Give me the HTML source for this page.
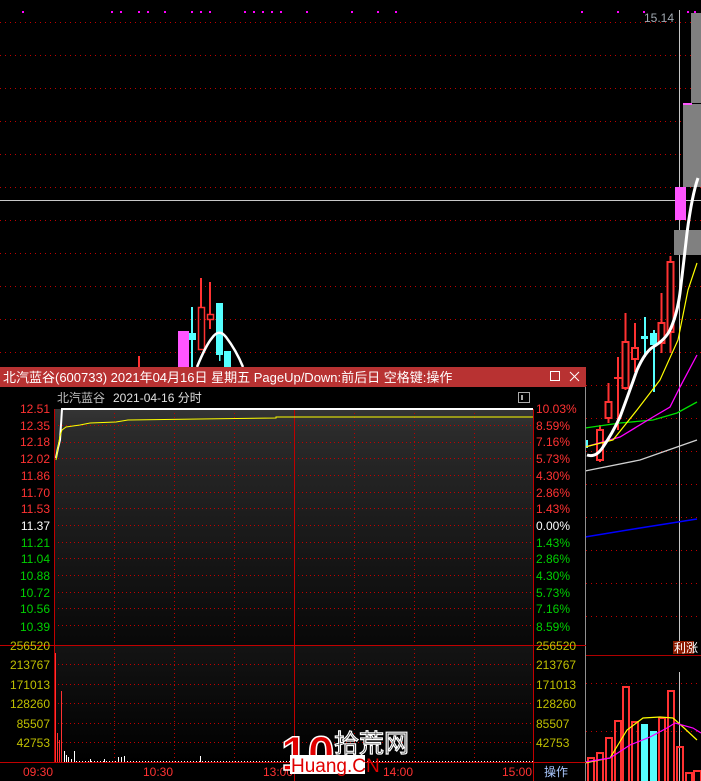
<!DOCTYPE html>
<html><head><meta charset="utf-8"><style>
html,body{margin:0;padding:0;background:#000;width:701px;height:781px;overflow:hidden}
svg{display:block}
text{font-family:"Liberation Sans","Noto Sans CJK SC",sans-serif;font-size:12px}
</style></head><body>
<svg width="701" height="781" viewBox="0 0 701 781" xmlns="http://www.w3.org/2000/svg">
<defs>
<linearGradient id="pg" x1="0" y1="0" x2="0" y2="1"><stop offset="0" stop-color="#353535"/><stop offset="0.1" stop-color="#2a2a2a"/><stop offset="1" stop-color="#080808"/></linearGradient>
<linearGradient id="vg" x1="0" y1="0" x2="0" y2="1"><stop offset="0" stop-color="#141414"/><stop offset="1" stop-color="#000"/></linearGradient>
</defs>
<rect width="701" height="781" fill="#000"/>
<g stroke="#c00000" stroke-dasharray="1,4" stroke-width="1">
<line x1="0" y1="22.5" x2="701" y2="22.5"/><line x1="0" y1="55.5" x2="701" y2="55.5"/><line x1="0" y1="88.5" x2="701" y2="88.5"/><line x1="0" y1="121.5" x2="701" y2="121.5"/><line x1="0" y1="154.5" x2="701" y2="154.5"/><line x1="0" y1="187.5" x2="701" y2="187.5"/><line x1="0" y1="220.5" x2="701" y2="220.5"/><line x1="0" y1="253.5" x2="701" y2="253.5"/><line x1="0" y1="286.5" x2="701" y2="286.5"/><line x1="0" y1="319.5" x2="701" y2="319.5"/><line x1="0" y1="352.5" x2="701" y2="352.5"/>
<line x1="586" y1="385.5" x2="701" y2="385.5"/><line x1="586" y1="418.5" x2="701" y2="418.5"/><line x1="586" y1="451.5" x2="701" y2="451.5"/><line x1="586" y1="484.5" x2="701" y2="484.5"/><line x1="586" y1="517.5" x2="701" y2="517.5"/><line x1="586" y1="550.5" x2="701" y2="550.5"/><line x1="586" y1="583.5" x2="701" y2="583.5"/><line x1="586" y1="616.5" x2="701" y2="616.5"/>
<line x1="586" y1="683.5" x2="701" y2="683.5"/><line x1="586" y1="731.5" x2="701" y2="731.5"/>
</g>
<line x1="0" y1="200.5" x2="701" y2="200.5" stroke="#c8c8c8"/>
<line x1="679.5" y1="10" x2="679.5" y2="645" stroke="#c8c8c8"/>
<line x1="679.5" y1="672" x2="679.5" y2="781" stroke="#c8c8c8"/>
<line x1="586" y1="655.5" x2="701" y2="655.5" stroke="#b00000"/>
<g fill="#ff00ff">
<rect x="22" y="11" width="2" height="2"/><rect x="111" y="11" width="2" height="2"/><rect x="120" y="11" width="2" height="2"/><rect x="138" y="11" width="2" height="2"/><rect x="147" y="11" width="2" height="2"/><rect x="164" y="11" width="2" height="2"/><rect x="191" y="11" width="2" height="2"/><rect x="200" y="11" width="2" height="2"/><rect x="209" y="11" width="2" height="2"/><rect x="244" y="11" width="2" height="2"/><rect x="253" y="11" width="2" height="2"/><rect x="262" y="11" width="2" height="2"/><rect x="271" y="11" width="2" height="2"/><rect x="280" y="11" width="2" height="2"/><rect x="306" y="11" width="2" height="2"/><rect x="351" y="11" width="2" height="2"/><rect x="377" y="11" width="2" height="2"/><rect x="395" y="11" width="2" height="2"/><rect x="581" y="11" width="2" height="2"/><rect x="617" y="11" width="2" height="2"/><rect x="643" y="11" width="2" height="2"/><rect x="687" y="11" width="2" height="2"/><rect x="694" y="11" width="2" height="2"/>
</g>
<rect x="138" y="356" width="2" height="12" fill="#ff3232"/>
<rect x="178" y="331" width="11" height="37" fill="#ff55ff"/>
<rect x="191" y="307" width="2" height="60" fill="#55ffff"/>
<rect x="189" y="333" width="7" height="7" fill="#55ffff"/>
<rect x="200" y="278" width="2" height="30" fill="#ff3232"/>
<rect x="198.5" y="307.5" width="6" height="42" fill="none" stroke="#ff3232" stroke-width="1.5"/>
<rect x="209" y="282" width="2" height="47" fill="#ff3232"/>
<rect x="207.5" y="314.5" width="6" height="5" fill="#000" stroke="#ff3232" stroke-width="1.5"/>
<rect x="216" y="303" width="7" height="52" fill="#55ffff"/>
<rect x="219" y="355" width="1.5" height="6" fill="#55ffff"/>
<rect x="224" y="351" width="7" height="17" fill="#55ffff"/>
<path d="M197,367 Q206,345 212,338 Q219,328 226,337 Q236,350 243,367" fill="none" stroke="#fff" stroke-width="2.5"/>
<rect x="691" y="13" width="10" height="90" fill="#808080"/>
<rect x="683" y="104" width="18" height="83" fill="#808080"/>
<rect x="683" y="103" width="9" height="2" fill="#ff55ff"/>
<rect x="675" y="187" width="11" height="33" fill="#ff55ff"/>
<rect x="674" y="230" width="27" height="25" fill="#808080"/>
<text x="644" y="22" fill="#a0a8b0" font-size="12">15.14</text>
<g fill="none" stroke="#ff3232" stroke-width="2">
<line x1="600" y1="425" x2="600" y2="462"/><rect x="597" y="430" width="6" height="30" fill="#000"/>
<line x1="608.5" y1="383" x2="608.5" y2="423"/><rect x="605.5" y="402" width="6" height="16" fill="#000"/>
<line x1="618" y1="357" x2="618" y2="430"/><line x1="614" y1="378" x2="622" y2="378"/>
<line x1="625.5" y1="313" x2="625.5" y2="390"/><rect x="622.5" y="342" width="6" height="46" fill="#000"/>
<line x1="635" y1="323" x2="635" y2="372"/><rect x="632" y="348" width="6" height="11" fill="#000"/>
<line x1="661.5" y1="293" x2="661.5" y2="353"/><rect x="658.5" y="323" width="6" height="20" fill="#000"/>
<line x1="670.5" y1="256" x2="670.5" y2="353"/><rect x="667.5" y="262" width="6" height="70" fill="#000"/>
</g>
<rect x="644" y="317" width="2" height="40" fill="#55ffff"/><rect x="641" y="336" width="7" height="3" fill="#55ffff"/>
<rect x="653" y="330" width="2" height="62" fill="#55ffff"/><rect x="650" y="333" width="7" height="12" fill="#55ffff"/>
<rect x="586" y="440" width="2" height="8" fill="#55ffff"/>
<polyline points="585,471 640,460 697,440" fill="none" stroke="#d0d0d0" stroke-width="1.3"/>
<polyline points="585,537 640,528 697,519" fill="none" stroke="#0000ff" stroke-width="1.5"/>
<polyline points="585,428 620,423 653,420 677,413 697,402" fill="none" stroke="#00e000" stroke-width="1.3"/>
<polyline points="585,447 620,437 653,417 670,407 680,387 697,355" fill="none" stroke="#ff00ff" stroke-width="1.3"/>
<polyline points="585,447 613,440 637,410 660,380 678,340 688,290 697,263" fill="none" stroke="#ffff00" stroke-width="1.2"/>
<path d="M587,455 Q596,458 603,447 Q612,434 620,417 Q630,390 637,370 Q645,352 653,347 Q665,340 670,330 Q677,315 680,293 Q684,260 687,233 Q692,195 698,178" fill="none" stroke="#fff" stroke-width="3"/>
<rect x="673" y="641" width="21" height="13" fill="#8b1a00"/>
<text x="674" y="652" fill="#fff" font-size="11">利涨</text>
<g fill="none" stroke="#ff3232" stroke-width="2">
<rect x="588" y="758" width="6" height="24"/><rect x="597" y="753" width="6" height="29"/><rect x="606" y="738" width="6" height="44"/><rect x="615" y="721" width="6" height="61"/><rect x="623" y="687" width="6" height="95"/><rect x="632" y="722" width="6" height="60"/><rect x="659" y="718" width="6" height="64"/><rect x="668" y="691" width="6" height="91"/><rect x="677" y="747" width="6" height="35"/><rect x="686" y="773" width="6" height="9"/><rect x="694" y="771" width="7" height="11"/>
</g>
<rect x="641" y="724" width="7" height="57" fill="#55ffff"/><rect x="650" y="731" width="7" height="50" fill="#55ffff"/>
<polyline points="585,763 610,758 627,730 643,718 660,717 673,718 683,727 697,740" fill="none" stroke="#ffff00" stroke-width="1.2"/>
<polyline points="585,762 610,758 630,745 650,737 667,728 675,723 693,728 701,733" fill="none" stroke="#ff00ff" stroke-width="1.2"/>

<rect x="0" y="367" width="586" height="414" fill="#000"/>
<rect x="0" y="367" width="586" height="20" fill="#b83232"/>
<text x="3" y="382" fill="#fff" style="font-size:13px">北汽蓝谷(600733) 2021年04月16日 星期五 PageUp/Down:前后日 空格键:操作</text>
<rect x="550.5" y="371.5" width="9" height="9" fill="none" stroke="#fff"/>
<path d="M570,372 L579,381 M579,372 L570,381" stroke="#fff" stroke-width="1"/>
<line x1="585.5" y1="387" x2="585.5" y2="781" stroke="#909090"/>
<text x="57" y="402" fill="#c0c0c0">北汽蓝谷</text>
<text x="113" y="402" fill="#e0e0e0">2021-04-16 分时</text>
<rect x="518.5" y="392.5" width="11" height="10" fill="none" stroke="#aaa"/><rect x="521" y="395" width="2" height="5" fill="#aaa"/>
<rect x="54" y="409" width="479" height="236" fill="url(#pg)"/>
<rect x="54" y="645" width="479" height="117" fill="url(#vg)"/>
<g stroke="#c00000" stroke-dasharray="1,3">
<line x1="54" y1="425.5" x2="533" y2="425.5"/><line x1="54" y1="442.5" x2="533" y2="442.5"/><line x1="54" y1="458.5" x2="533" y2="458.5"/><line x1="54" y1="475.5" x2="533" y2="475.5"/><line x1="54" y1="492.5" x2="533" y2="492.5"/><line x1="54" y1="508.5" x2="533" y2="508.5"/><line x1="54" y1="525.5" x2="533" y2="525.5"/><line x1="54" y1="542.5" x2="533" y2="542.5"/><line x1="54" y1="558.5" x2="533" y2="558.5"/><line x1="54" y1="575.5" x2="533" y2="575.5"/><line x1="54" y1="592.5" x2="533" y2="592.5"/><line x1="54" y1="608.5" x2="533" y2="608.5"/><line x1="54" y1="625.5" x2="533" y2="625.5"/>
<line x1="54" y1="664.5" x2="533" y2="664.5"/><line x1="54" y1="684.5" x2="533" y2="684.5"/><line x1="54" y1="703.5" x2="533" y2="703.5"/><line x1="54" y1="723.5" x2="533" y2="723.5"/><line x1="54" y1="742.5" x2="533" y2="742.5"/>
<line x1="114.5" y1="409" x2="114.5" y2="762"/><line x1="174.5" y1="409" x2="174.5" y2="762"/><line x1="234.5" y1="409" x2="234.5" y2="762"/><line x1="354.5" y1="409" x2="354.5" y2="762"/><line x1="414.5" y1="409" x2="414.5" y2="762"/><line x1="474.5" y1="409" x2="474.5" y2="762"/>
</g>
<g stroke="#c00000">
<line x1="294.5" y1="409" x2="294.5" y2="781"/>
<line x1="54.5" y1="409" x2="54.5" y2="762"/><line x1="533.5" y1="409" x2="533.5" y2="781"/>
<line x1="0" y1="645.5" x2="586" y2="645.5"/><line x1="0" y1="762.5" x2="586" y2="762.5"/>
</g>
<polyline points="56,458 58,448 60,440 61,425 62,409 533,409" fill="none" stroke="#fff" stroke-width="2"/>
<polyline points="56,460 58,447 60,436 62,430 66,427 80,425 90,423 116,422 128,420 276,418 276,417 533,417" fill="none" stroke="#ffff00" stroke-width="1"/>
<g stroke="#ff3232"><line x1="55.5" y1="653" x2="55.5" y2="762"/><line x1="57.5" y1="733" x2="57.5" y2="762"/><line x1="59.5" y1="740" x2="59.5" y2="762"/><line x1="61.5" y1="691" x2="61.5" y2="762"/></g>
<g stroke="#fff"><line x1="64.5" y1="751" x2="64.5" y2="762"/><line x1="66.5" y1="755" x2="66.5" y2="762"/><line x1="68.5" y1="757" x2="68.5" y2="762"/><line x1="71.5" y1="759" x2="71.5" y2="762"/><line x1="74.5" y1="751" x2="74.5" y2="762"/><line x1="90.5" y1="759" x2="90.5" y2="762"/><line x1="104.5" y1="759" x2="104.5" y2="762"/><line x1="118.5" y1="757" x2="118.5" y2="762"/><line x1="121.5" y1="757" x2="121.5" y2="762"/><line x1="124.5" y1="756" x2="124.5" y2="762"/><line x1="200.5" y1="756" x2="200.5" y2="762"/></g>
<line x1="76" y1="761.5" x2="533" y2="761.5" stroke="#fff" stroke-dasharray="1,2"/>
<g text-anchor="end" font-size="12">
<text x="50" y="413" fill="#ff3232">12.51</text><text x="50" y="430" fill="#ff3232">12.35</text><text x="50" y="446" fill="#ff3232">12.18</text><text x="50" y="463" fill="#ff3232">12.02</text><text x="50" y="480" fill="#ff3232">11.86</text><text x="50" y="497" fill="#ff3232">11.70</text><text x="50" y="513" fill="#ff3232">11.53</text><text x="50" y="530" fill="#fff">11.37</text><text x="50" y="547" fill="#00d000">11.21</text><text x="50" y="563" fill="#00d000">11.04</text><text x="50" y="580" fill="#00d000">10.88</text><text x="50" y="597" fill="#00d000">10.72</text><text x="50" y="613" fill="#00d000">10.56</text><text x="50" y="631" fill="#00d000">10.39</text>
<text x="50" y="650" fill="#c0c000">256520</text><text x="50" y="669" fill="#c0c000">213767</text><text x="50" y="689" fill="#c0c000">171013</text><text x="50" y="708" fill="#c0c000">128260</text><text x="50" y="728" fill="#c0c000">85507</text><text x="50" y="747" fill="#c0c000">42753</text>
</g>
<g font-size="12">
<text x="536" y="413" fill="#ff3232">10.03%</text><text x="536" y="430" fill="#ff3232">8.59%</text><text x="536" y="446" fill="#ff3232">7.16%</text><text x="536" y="463" fill="#ff3232">5.73%</text><text x="536" y="480" fill="#ff3232">4.30%</text><text x="536" y="497" fill="#ff3232">2.86%</text><text x="536" y="513" fill="#ff3232">1.43%</text><text x="536" y="530" fill="#fff">0.00%</text><text x="536" y="547" fill="#00d000">1.43%</text><text x="536" y="563" fill="#00d000">2.86%</text><text x="536" y="580" fill="#00d000">4.30%</text><text x="536" y="597" fill="#00d000">5.73%</text><text x="536" y="613" fill="#00d000">7.16%</text><text x="536" y="631" fill="#00d000">8.59%</text>
<text x="536" y="650" fill="#c0c000">256520</text><text x="536" y="669" fill="#c0c000">213767</text><text x="536" y="689" fill="#c0c000">171013</text><text x="536" y="708" fill="#c0c000">128260</text><text x="536" y="728" fill="#c0c000">85507</text><text x="536" y="747" fill="#c0c000">42753</text>
<text x="23" y="776" fill="#ff3232">09:30</text><text x="143" y="776" fill="#ff3232">10:30</text><text x="263" y="776" fill="#ff3232">13:00</text><text x="383" y="776" fill="#ff3232">14:00</text><text x="502" y="776" fill="#ff3232">15:00</text>
<text x="544" y="776" fill="#aac8ff">操作</text>
</g>
<text x="281" y="770" fill="#e00000" stroke="#fff" stroke-width="1.5" font-weight="bold" style="font-size:48px">10</text>
<text x="334" y="752" fill="#111" stroke="#fff" stroke-width="1.2" style="font-size:25px">拾荒网</text>
<rect x="290" y="755" width="75" height="19" fill="#fff"/>
<text x="291" y="772" fill="#e00000" style="font-size:19px">Huang.CN</text>
</svg>
</body></html>
